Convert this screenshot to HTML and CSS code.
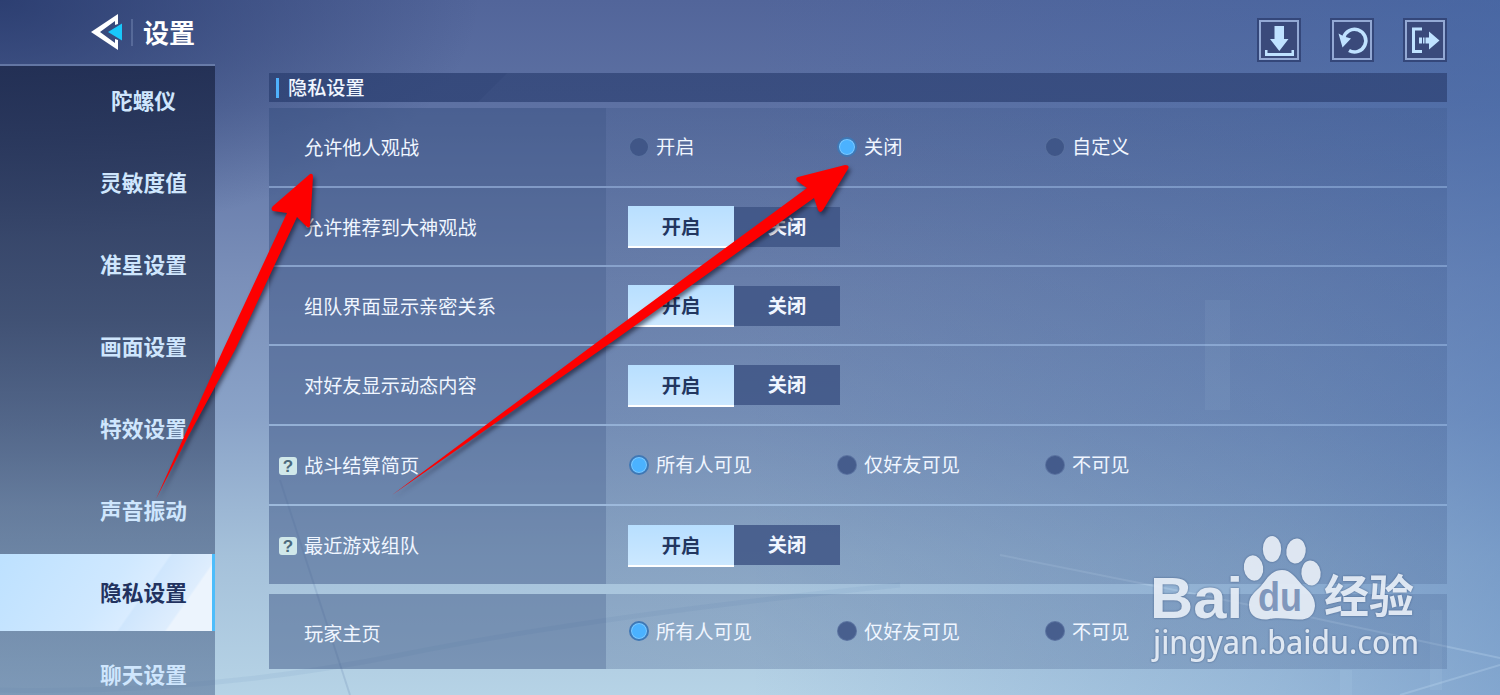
FILE: index.html
```html
<!DOCTYPE html>
<html lang="zh-CN">
<head>
    <meta charset="UTF-8">
    <meta name="viewport" content="width=device-width, initial-scale=1.0">
    <title>设置</title>
    <link rel="stylesheet" href="styles.css">
</head>
<body>

    <div class="screen">
        <svg class="scenery" viewBox="0 0 1500 695">
            <path d="M0 690 Q200 695 400 655 T900 585" fill="none" stroke="#6f92bd" stroke-width="5" opacity=".12"/>
            <path d="M280 480L350 695" stroke="#6f8db5" stroke-width="2" opacity=".25"/>
            <path d="M1000 555L1300 615L1500 658M1400 695L1500 665" fill="none" stroke="#d5ecff" stroke-width="2" opacity=".22"/>
            <path d="M1205 300h25v110h-25zM1430 610h12v80h-12zM1340 670h12v25h-12z" fill="#c5ddf5" opacity=".1"/>
        </svg>

        <aside class="sidebar">
            <header class="title">
                <svg class="back" width="34" height="38" viewBox="0 0 34 38">
                    <path d="M27 1L0 19l27 18V27l-3-1v4L9 19L24 8v4l3-1z" fill="#fff"/>
                    <path d="M17 19l14-8.500v17z" fill="#19c8fb"/>
                </svg>
                <span class="title-line"></span>
                <h1>设置</h1>
            </header>
            <ul class="menu">
                <li>陀螺仪</li>
                <li>灵敏度值</li>
                <li>准星设置</li>
                <li>画面设置</li>
                <li>特效设置</li>
                <li>声音振动</li>
                <li class="active">隐私设置</li>
                <li>聊天设置</li>
            </ul>
        </aside>

        <main class="content">
            <div class="tools">
                <button class="tool">
                    <svg width="36" height="36" viewBox="0 0 36 36"><path d="M13.500 4h9.500v13h4.500L18.300 29L9 17h4.500z"/><path d="M4 28v6h29v-6h-2.500v3h-24v-3z"/></svg>
                </button>
                <button class="tool">
                    <svg width="36" height="36" viewBox="0 0 36 36"><path d="M9.500 16A11.300 11.300 0 1 1 15 28.500" fill="none" stroke="#bfe2ff" stroke-width="3.600"/><path d="M4.500 11.500L10 14.500L17 16.500L8.500 25.500z"/></svg>
                </button>
                <button class="tool">
                    <svg width="36" height="36" viewBox="0 0 36 36"><path d="M15 7H6.500v22.500H15" fill="none" stroke="#bfe2ff" stroke-width="3"/><path d="M12 15.500h3v6h-3zM16 15.500h1.500v6H16zM18.500 15.500H22V9.500l10.500 9l-10.500 9v-6h-3.500z"/></svg>
                </button>
            </div>

            <h2 class="section-title">隐私设置</h2>

            <div class="rows">
                <div class="row">
                    <div class="label">允许他人观战</div>
                    <div class="value">
                        <span class="radio">开启</span>
                        <span class="radio checked">关闭</span>
                        <span class="radio">自定义</span>
                    </div>
                </div>
                <div class="row">
                    <div class="label">允许推荐到大神观战</div>
                    <div class="value">
                        <span class="toggle on">开启</span><span class="toggle">关闭</span>
                    </div>
                </div>
                <div class="row">
                    <div class="label">组队界面显示亲密关系</div>
                    <div class="value">
                        <span class="toggle on">开启</span><span class="toggle">关闭</span>
                    </div>
                </div>
                <div class="row">
                    <div class="label">对好友显示动态内容</div>
                    <div class="value">
                        <span class="toggle on">开启</span><span class="toggle">关闭</span>
                    </div>
                </div>
                <div class="row">
                    <div class="label"><span class="help">?</span>战斗结算简页</div>
                    <div class="value">
                        <span class="radio checked">所有人可见</span>
                        <span class="radio">仅好友可见</span>
                        <span class="radio">不可见</span>
                    </div>
                </div>
                <div class="row">
                    <div class="label"><span class="help">?</span>最近游戏组队</div>
                    <div class="value">
                        <span class="toggle on">开启</span><span class="toggle">关闭</span>
                    </div>
                </div>
            </div>

            <div class="rows single">
                <div class="row">
                    <div class="label">玩家主页</div>
                    <div class="value">
                        <span class="radio checked">所有人可见</span>
                        <span class="radio">仅好友可见</span>
                        <span class="radio">不可见</span>
                    </div>
                </div>
            </div>
        </main>

        <!-- Watermark -->
        <svg class="watermark" width="290" height="150" viewBox="1140 530 290 150">
            <g class="mark">
                <text class="wm-bai" x="1150" y="617.500" textLength="93" lengthAdjust="spacingAndGlyphs">Bai</text>
                <ellipse cx="1253.500" cy="568" rx="9.700" ry="12.700" transform="rotate(-8 1253.500 568)"/>
                <ellipse cx="1272" cy="549" rx="9.200" ry="13"/>
                <ellipse cx="1296" cy="551" rx="9.700" ry="12.500" transform="rotate(8 1296 551)"/>
                <ellipse cx="1311" cy="573" rx="9.700" ry="12.500" transform="rotate(-6 1311 573)"/>
                <path d="M1282 570C1291 570 1296 578 1302 585C1310 592 1315 597 1315 606C1314 617 1307 620 1298 619.500C1287 619 1278 617 1267 619.500C1256 620 1249 615 1249 605C1249 596 1255 592 1261 586C1267 579 1271 570 1282 570Z"/>
            </g>
            <text class="wm-du" x="1258" y="611" textLength="44" lengthAdjust="spacingAndGlyphs">du</text>
            <g class="mark">
                <text class="wm-cn" x="1324" y="612.500" textLength="90">经验</text>
                <text class="wm-url" x="1153" y="654" textLength="266" lengthAdjust="spacingAndGlyphs">jingyan.baidu.com</text>
            </g>
        </svg>

        <!-- Pointer arrows -->
        <svg class="arrows" viewBox="0 0 1500 695">
            <path d="M156 499L223 350L287 213L273 211Q270 209 273 206L310 174Q313 173 313 177L310 226Q309 229 306 226L297 217L235 350L190 433Z"/>
            <path d="M392 495L600 340L807 188L797 181Q795 178 798 177L845 165Q850 165 848 169L823 210Q820 214 818 210L814 198L612 342Z"/>
        </svg>
    </div>

</body>
</html>
```
FILE: styles.css
```css
*,
*::before {
    box-sizing: border-box;
}
body {
    margin: 0;
    font-family: "Noto Sans CJK SC", sans-serif;
    color: #f0f6ff;
}
.screen {
    position: relative;
    display: flex;
    width: 1500px;
    height: 695px;
    overflow: hidden;
    background:
        radial-gradient(ellipse 480px 240px at 0 0, rgba(32, 50, 100, 0.75), rgba(32, 50, 100, 0)),
        linear-gradient(90deg, rgba(60, 105, 175, 0) 50%, rgba(60, 105, 175, 0.25) 85%, rgba(60, 105, 175, 0.42) 100%),
        linear-gradient(180deg, #52659a 0%, #5d71a3 15%, #7a8fb9 40%, #8aa3c8 60%, #a5c1da 80%, #b6d3e6 100%);
}
.scenery,
.arrows {
    position: absolute;
    top: 0;
    left: 0;
    width: 1500px;
    height: 695px;
}
.arrows path {
    fill: #fe0000;
    filter: drop-shadow(2px 3px 2px rgba(20, 20, 40, 0.6));
}

/* Sidebar */
.sidebar {
    position: relative;
    width: 215px;
    flex: none;
}
.title {
    display: flex;
    align-items: center;
    height: 66px;
    padding-left: 91px;
    border-bottom: 2px solid rgba(140, 160, 200, 0.5);
}
.title-line {
    width: 2px;
    height: 27px;
    margin-left: 6px;
    background: rgba(140, 160, 200, 0.35);
}
h1 {
    margin: 0 0 0 10px;
    font-size: 26px;
    line-height: 36px;
    font-weight: 700;
    white-space: nowrap;
    color: #fff;
}
.menu {
    display: flex;
    flex-direction: column;
    gap: 5px;
    height: 629px;
    margin: 0;
    padding: 0;
    overflow: hidden;
    list-style: none;
    background: linear-gradient(180deg, rgba(31, 43, 78, 0.86) 0%, rgba(45, 60, 93, 0.76) 40%, rgba(65, 85, 120, 0.6) 70%, rgba(85, 112, 150, 0.58) 100%);
}
.menu li {
    flex: none;
    height: 77px;
    padding-left: 72px;
    line-height: 75px;
    text-align: center;
    font-size: 21.7px;
    font-weight: 700;
    color: #cfe6fd;
}
.menu li:first-child {
    margin-top: -4px;
}
.menu .active {
    color: #22325f;
    border-right: 3px solid #4dbdfb;
    padding-left: 75px;
    background: linear-gradient(125deg, #bde1ff 0%, #cfe8ff 50%, #d9ecff 64%, #cfe6fd 65%, #deedfd 82%, #ecf4fd 83%);
}

/* Content */
.content {
    position: relative;
    width: 1178px;
    margin-left: 54px;
}
.tools {
    display: flex;
    justify-content: flex-end;
    gap: 29px;
    height: 73px;
    padding-top: 18px;
}
.tool {
    width: 44px;
    height: 44px;
    padding: 0;
    border: 2px solid #34477a;
    background: #3a4a7b;
}
.tool svg {
    display: block;
    width: 40px;
    height: 40px;
    border: 2px solid #93a9d4;
    fill: #bfe2ff;
}
.section-title {
    display: flex;
    align-items: center;
    height: 29px;
    margin: 0 0 6px;
    padding-bottom: 1px;
    font-size: 19.2px;
    font-weight: 500;
    background: linear-gradient(135deg, rgba(45, 65, 115, 0.8) 168px, rgba(45, 65, 115, 0.72) 169px);
}
.section-title::before {
    content: "";
    width: 3px;
    height: 20px;
    margin: 1px 9px 0 7px;
    background: #4fb1fd;
}
.rows {
    display: grid;
    grid-template-rows: 80px 79px 79px 80px 80px 78px;
}
.single {
    grid-template-rows: 75px;
    margin-top: 10px;
}
.row {
    display: flex;
    border-bottom: 2px solid rgba(160, 190, 230, 0.42);
}
.row:last-child {
    border-bottom: none;
}
.label {
    display: flex;
    align-items: center;
    width: 337px;
    padding: 0 0 0 35px;
    font-size: 19.2px;
    background: rgba(50, 75, 125, 0.45);
}
.help {
    width: 18px;
    height: 18px;
    margin: 1px 7px 0 -25px;
    border-radius: 3px;
    background: #d0e8ea;
    color: #4b6a7c;
    font: bold 17px/19px "Liberation Sans", sans-serif;
    text-align: center;
}
.single .label {
    padding-top: 2px;
}
.value {
    display: flex;
    flex: 1;
    align-items: center;
    padding-left: 22px;
    background: linear-gradient(90deg, rgba(50, 75, 125, 0.26), rgba(50, 75, 125, 0.2));
}
.radio {
    display: flex;
    align-items: center;
    width: 208px;
    padding-left: 1px;
    margin-top: -2px;
    font-size: 19.2px;
}
.radio::before {
    content: "";
    width: 20px;
    height: 20px;
    margin: 1px 7px 0 0;
    border: 1px solid rgba(98, 122, 168, 0.7);
    border-radius: 50%;
    background: rgba(60, 82, 132, 0.85);
}
.radio.checked::before {
    border: 2px solid #3f78b5;
    background: #4bb2ff;
    box-shadow: inset 0 0 0 1px #7dc9ff;
}
.toggle {
    width: 106px;
    height: 40px;
    line-height: 39px;
    text-align: center;
    font-size: 19.2px;
    font-weight: 700;
    background: rgba(61, 83, 132, 0.82);
}
.toggle.on {
    height: 42px;
    margin-top: 1px;
    line-height: 40px;
    color: #22365f;
    border-bottom: 2px solid #fff;
    background: linear-gradient(180deg, #b8dfff, #cce8ff);
}

/* Watermark */
.watermark {
    position: absolute;
    left: 1140px;
    top: 530px;
}
.mark {
    fill: #e6edf6;
    opacity: 0.93;
    filter: drop-shadow(0 0 1px rgba(60, 85, 125, 0.8));
}
.wm-bai {
    font: bold 58px "Liberation Sans", sans-serif;
}
.wm-du {
    font: bold 40px "Liberation Sans", sans-serif;
    fill: #8097bc;
}
.wm-cn {
    font: 700 45px "Noto Sans CJK SC", sans-serif;
}
.wm-url {
    font: 500 32px "Noto Sans", sans-serif;
}
```
